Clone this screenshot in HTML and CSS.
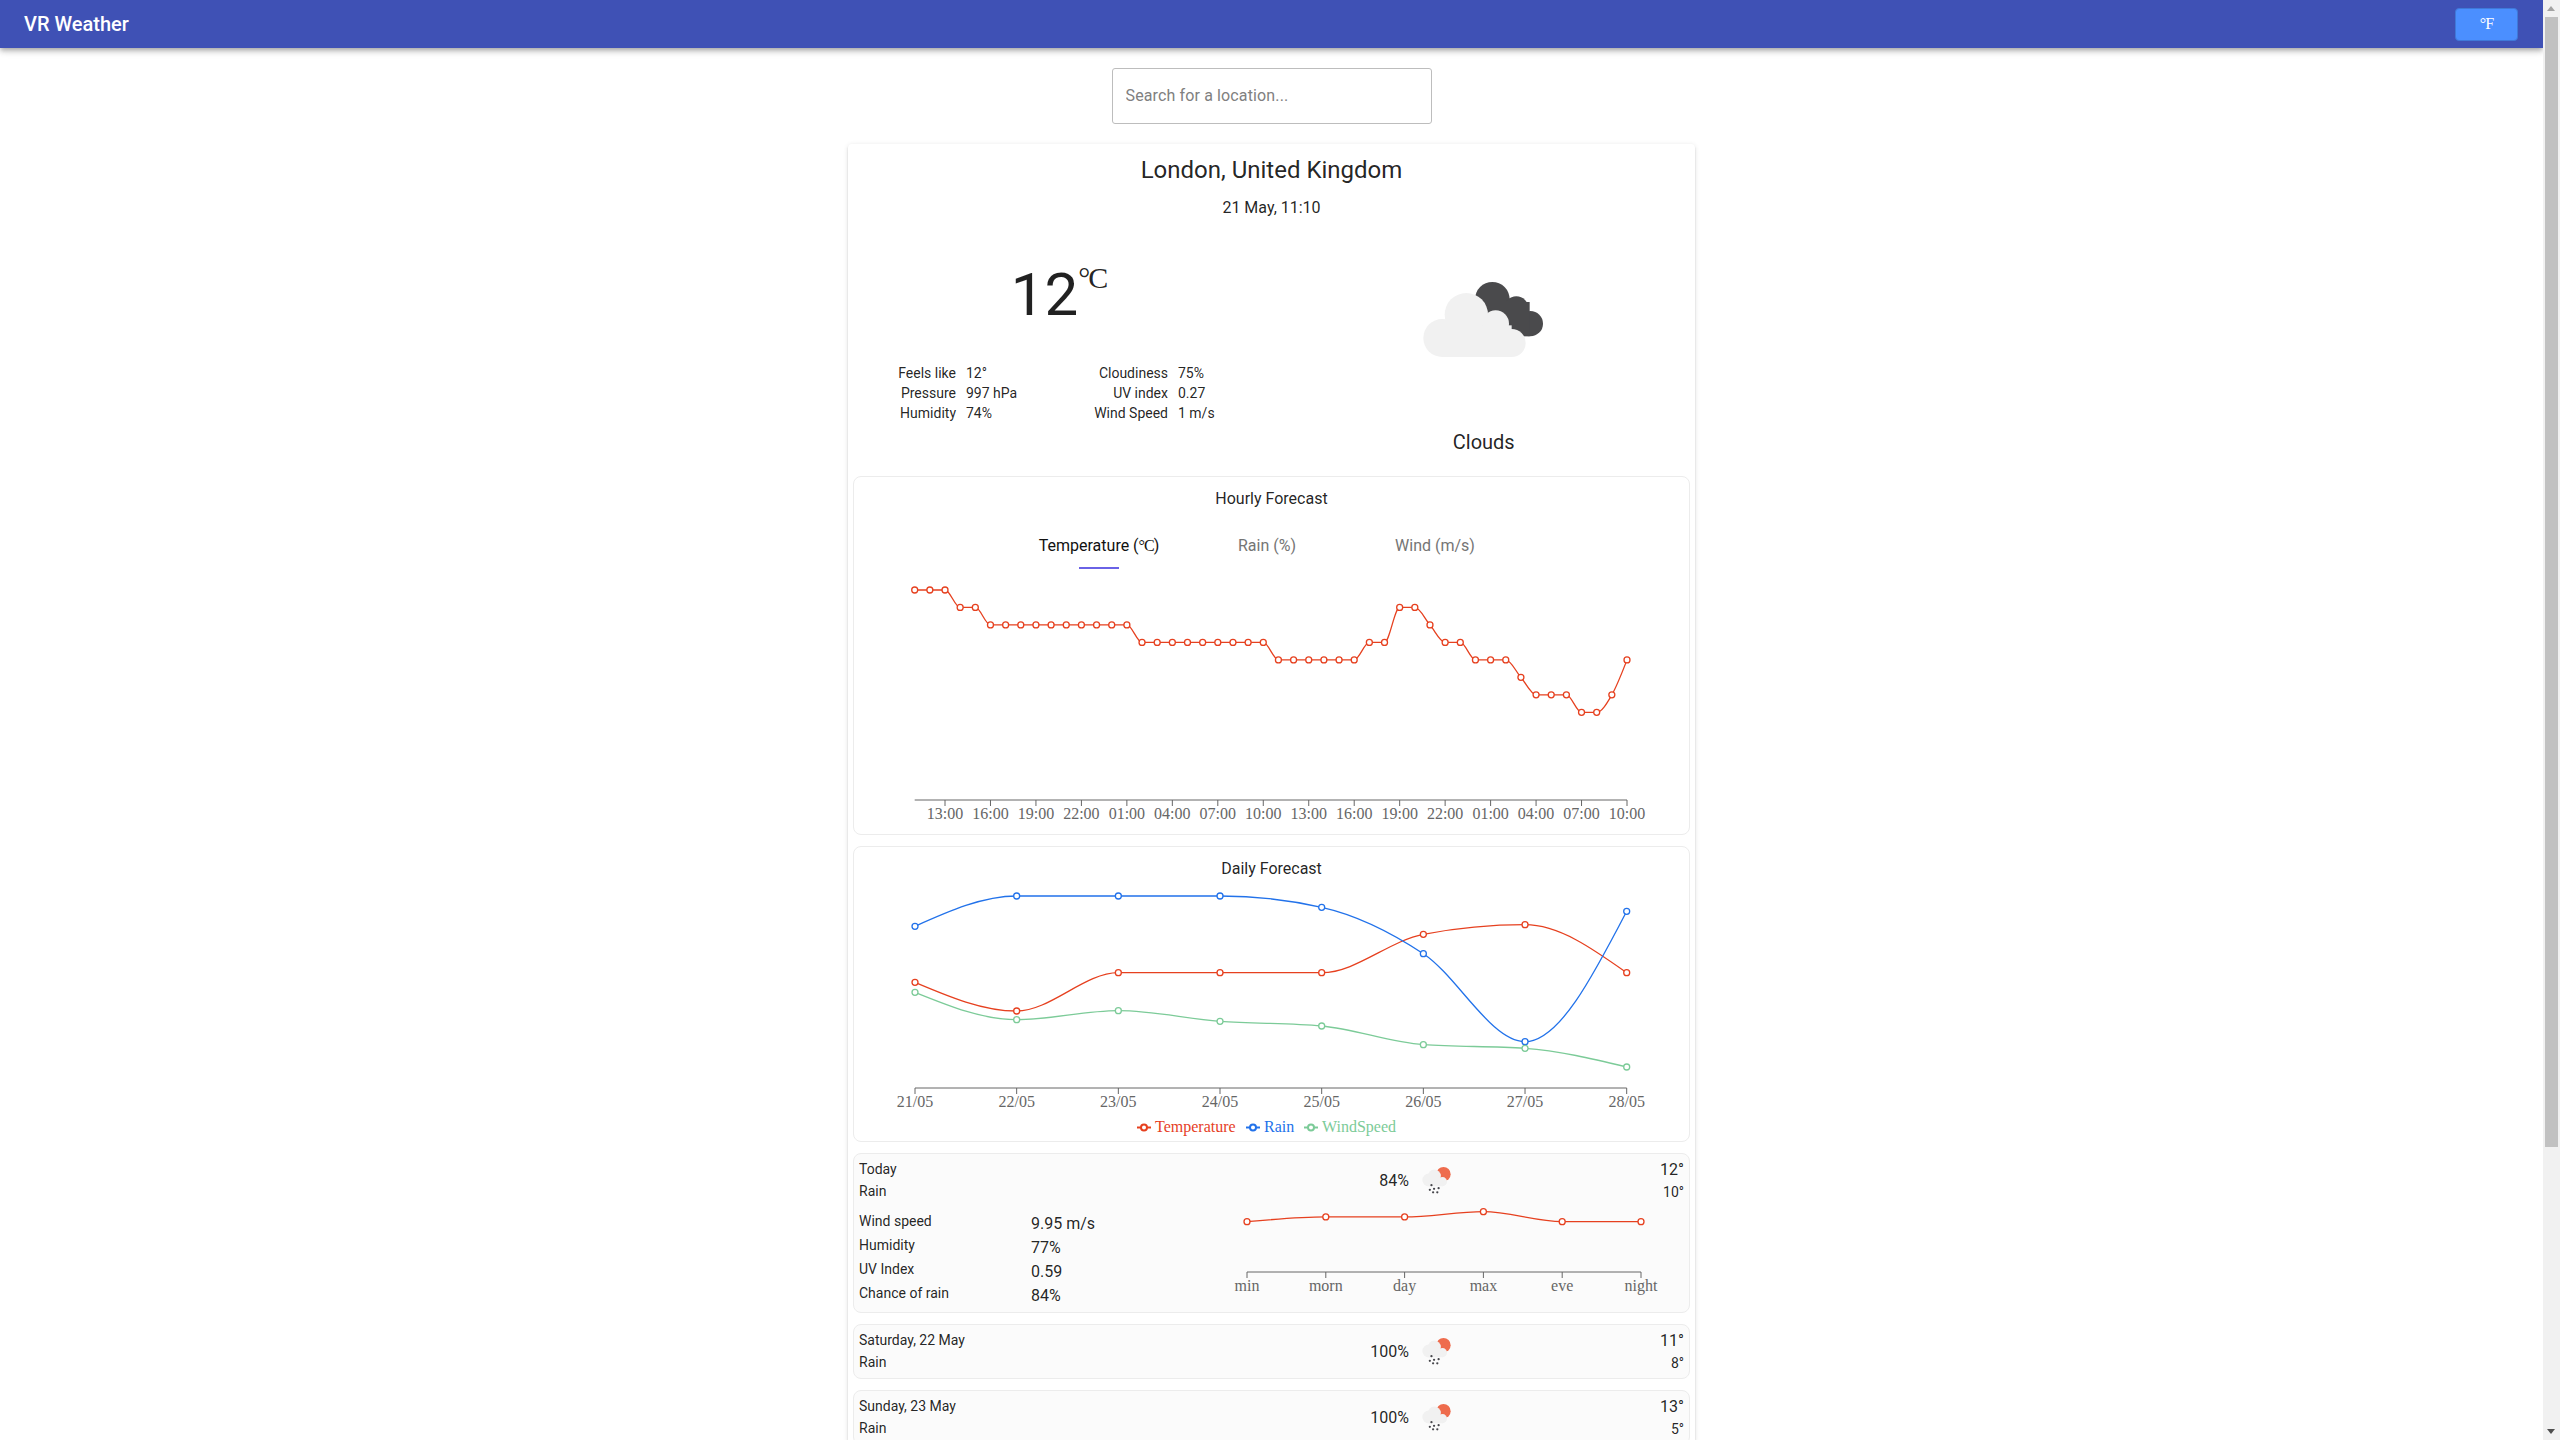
FILE: index.html
```html
<!DOCTYPE html>
<html lang="en">
<head>
<meta charset="utf-8">
<title>VR Weather</title>
<link rel="stylesheet" href="styles.css">
</head>
<body>
<svg class="defs" aria-hidden="true">
  <defs>
    <g id="rain">
      <circle cx="250" cy="72" r="22" fill="#ee6c4d"/>
      <g fill="#f1f1f1">
        <circle cx="205" cy="90" r="20"/>
        <circle cx="222" cy="78" r="20"/>
        <circle cx="247" cy="95" r="14"/>
        <rect x="205" y="85" width="42" height="24"/>
      </g>
      <g fill="#47474c">
        <circle cx="213" cy="106" r="3.5"/>
        <circle cx="208" cy="120" r="3.5"/>
        <circle cx="221" cy="117" r="3.5"/>
        <circle cx="235" cy="115" r="3.5"/>
        <circle cx="218" cy="128" r="3.5"/>
        <circle cx="231" cy="128" r="3.5"/>
      </g>
    </g>
  </defs>
</svg>
<div class="page">
  <div class="viewport">
    <header class="toolbar">
      <span class="brand">VR Weather</span>
      <button class="unit-btn" type="button">°F</button>
    </header>
    <div class="search-row">
      <input class="search" type="text" placeholder="Search for a location...">
    </div>
    <main class="card">
      <h1 class="city">London, United Kingdom</h1>
      <div class="date">21 May, 11:10</div>
      <section class="now">
        <div class="now-left">
          <div class="temp"><span>12</span><span class="temp-unit">°C</span></div>
          <div class="stats">
            <div class="stat-col">
              <div class="stat"><span class="stat-k">Feels like</span><span>12°</span></div>
              <div class="stat"><span class="stat-k">Pressure</span><span>997 hPa</span></div>
              <div class="stat"><span class="stat-k">Humidity</span><span>74%</span></div>
            </div>
            <div class="stat-col">
              <div class="stat"><span class="stat-k">Cloudiness</span><span>75%</span></div>
              <div class="stat"><span class="stat-k">UV index</span><span>0.27</span></div>
              <div class="stat"><span class="stat-k">Wind Speed</span><span>1 m/s</span></div>
            </div>
          </div>
        </div>
        <div class="now-right">
          <svg class="cloud" viewBox="70 65 360 225" aria-hidden="true">
            <g fill="#4a4a4c">
              <circle cx="278" cy="117" r="52"/>
              <circle cx="350" cy="145" r="37"/>
              <circle cx="392" cy="190" r="38"/>
              <rect x="240" y="125" width="150" height="103"/>
            </g>
            <g fill="#f1f1f1">
              <circle cx="200" cy="163" r="65"/>
              <circle cx="128" cy="233" r="57"/>
              <circle cx="288" cy="190" r="40"/>
              <circle cx="336" cy="248" r="42"/>
              <rect x="128" y="195" width="208" height="95"/>
            </g>
          </svg>
          <div class="condition">Clouds</div>
        </div>
      </section>

      <section class="panel hourly">
        <div class="panel-title">Hourly Forecast</div>
        <div class="tabs">
          <div class="tab active">Temperature (<span class="serif">°C</span>)</div>
          <div class="tab">Rain (%)</div>
          <div class="tab">Wind (m/s)</div>
        </div>
        <svg class="chart chart-hourly" id="hourly"></svg>
      </section>

      <section class="panel daily">
        <div class="panel-title">Daily Forecast</div>
        <svg class="chart chart-daily" id="daily"></svg>
      </section>

      <section class="panel day">
        <div class="day-head">
          <div class="day-left"><div>Today</div><div>Rain</div></div>
          <div class="day-pct">84%</div>
          <svg class="rain-icon" viewBox="185 50 87 83" aria-hidden="true"><use href="#rain"/></svg>
          <div class="day-temps"><div class="hi">12°</div><div class="lo">10°</div></div>
        </div>
        <div class="day-detail">
          <div class="facts">
            <div class="fact-k">Wind speed</div><div class="fact-v">9.95 m/s</div>
            <div class="fact-k">Humidity</div><div class="fact-v">77%</div>
            <div class="fact-k">UV Index</div><div class="fact-v">0.59</div>
            <div class="fact-k">Chance of rain</div><div class="fact-v">84%</div>
          </div>
          <svg class="chart chart-today" id="today"></svg>
        </div>
      </section>

      <section class="panel day">
        <div class="day-head">
          <div class="day-left"><div>Saturday, 22 May</div><div>Rain</div></div>
          <div class="day-pct">100%</div>
          <svg class="rain-icon" viewBox="185 50 87 83" aria-hidden="true"><use href="#rain"/></svg>
          <div class="day-temps"><div class="hi">11°</div><div class="lo">8°</div></div>
        </div>
      </section>

      <section class="panel day">
        <div class="day-head">
          <div class="day-left"><div>Sunday, 23 May</div><div>Rain</div></div>
          <div class="day-pct">100%</div>
          <svg class="rain-icon" viewBox="185 50 87 83" aria-hidden="true"><use href="#rain"/></svg>
          <div class="day-temps"><div class="hi">13°</div><div class="lo">5°</div></div>
        </div>
      </section>
    </main>
  </div>
  <div class="scrollbar" aria-hidden="true">
    <div class="scroll-up"></div>
    <div class="scroll-thumb"></div>
    <div class="scroll-down"></div>
  </div>
</div>
<script src="charts.js"></script>
</body>
</html>
```
FILE: styles.css
```css
* { box-sizing: border-box; }
html, body { margin: 0; padding: 0; height: 1440px; overflow: hidden; background: #fff; }
body { font-family: Roboto, "Noto Sans", sans-serif; font-size: 14px; color: rgba(0,0,0,.87); }

.page { display: flex; height: 1440px; }
.viewport { flex: 1; min-width: 0; height: 1440px; overflow: hidden; }

.scrollbar { flex: 0 0 17px; background: #f1f1f1; display: flex; flex-direction: column; }
.scroll-up, .scroll-down { height: 17px; flex: none; position: relative; }
.scroll-down { margin-top: auto; }
.scroll-up::after { content: ""; position: absolute; left: 4px; top: 6px; border: 4px solid transparent; border-top: 0; border-bottom: 5px solid #a3a3a3; }
.scroll-down::after { content: ""; position: absolute; left: 4px; top: 6px; border: 4px solid transparent; border-bottom: 0; border-top: 5px solid #505050; }
.scroll-thumb { height: 1130px; margin: 0 2px; background: #c1c1c1; flex: none; }

.toolbar { position: relative; z-index: 2; height: 48px; background: #3f51b5; color: #fff; display: flex; align-items: center; justify-content: space-between; padding: 0 25px 0 24px; box-shadow: 0 2px 4px -1px rgba(0,0,0,.2), 0 4px 5px 0 rgba(0,0,0,.14), 0 1px 10px 0 rgba(0,0,0,.12); }
.brand { font-size: 20px; font-weight: 500; }
.unit-btn { width: 63px; height: 33px; background: #4b8fff; color: #fff; border: 1px solid #3f79d8; border-radius: 4px; font-family: "Liberation Serif", serif; font-size: 16px; letter-spacing: -1px; padding: 0; }

.search-row { display: flex; justify-content: center; padding-top: 20px; }
.search { width: 320px; height: 56px; border: 1px solid #bdbdbd; border-radius: 3px; padding: 0 13px 2px; font: 16px Roboto, sans-serif; letter-spacing: .13px; outline: none; background: #fff; }
.search::placeholder { color: #808080; opacity: 1; }

.card { width: 847px; margin: 20px auto 0; padding: 10px 5px 0; background: #fff; border-radius: 4px; box-shadow: 0 3px 1px -2px rgba(0,0,0,.2), 0 2px 2px 0 rgba(0,0,0,.14), 0 1px 5px 0 rgba(0,0,0,.12); }
.city { margin: 0; font-size: 24px; font-weight: 400; line-height: 32px; text-align: center; }
.date { margin-top: 10px; font-size: 16px; line-height: 24px; text-align: center; }

.now { display: flex; margin: 0 -5px; height: 256px; }
.now-left, .now-right { flex: 0 0 50%; }
.now-left { padding-top: 39px; }
.temp { display: flex; justify-content: center; height: 72px; padding-right: 3px; line-height: 72px; font-size: 60px; font-weight: 400; }
.temp-unit { font-family: "Liberation Serif", serif; font-size: 30px; line-height: 37px; letter-spacing: -2px; font-weight: 400; }
.stats { display: flex; margin-top: 32px; }
.stat-col { flex: 0 0 212px; }
.stat { display: flex; line-height: 20px; height: 20px; }
.stat-k { width: 108px; margin-right: 10px; text-align: right; }

.now-right { display: flex; flex-direction: column; align-items: center; padding-top: 62px; }
.cloud { width: 120px; height: 75px; display: block; margin-right: 2px; }
.condition { margin-top: 71px; font-size: 20px; line-height: 28px; }

.panel { border: 1px solid #ececec; border-radius: 8px; margin-bottom: 11px; background: #fff; }
.panel-title { font-size: 16px; height: 24px; line-height: 26px; text-align: center; }
.hourly { height: 359px; padding-top: 9px; }
.daily { height: 296px; padding-top: 9px; }
.tabs { display: flex; justify-content: center; margin-top: 11px; padding-right: 9px; }
.tab { width: 168px; height: 48px; line-height: 49px; font-size: 16px; text-align: center; color: #757575; position: relative; }
.tab.active { color: #111; }
.tab.active::after { content: ""; position: absolute; left: 64px; bottom: 0; width: 40px; height: 2px; background: #6a62e6; }
.serif { font-family: "Liberation Serif", serif; letter-spacing: -1px; }

.chart { display: block; font-family: "Liberation Serif", serif; font-size: 16px; }
.chart-hourly { width: 835px; height: 265px; }
.chart-daily { width: 835px; height: 261px; }
.chart-today { width: 589px; height: 105px; flex: none; }

.day { background: #fbfbfb; }
.day-head { display: flex; align-items: center; height: 53px; padding: 4px 5px 5px; }
.day-left { width: 440px; line-height: 22px; }
.day-pct { width: 110px; text-align: right; font-size: 16px; }
.rain-icon { width: 29px; height: 27px; margin: 1px 0 0 13px; flex: none; }
.day-temps { margin-left: auto; padding-top: 2px; text-align: right; line-height: 22px; }
.hi { font-size: 16px; }
.lo { font-size: 14px; }

.day-detail { display: flex; justify-content: space-between; height: 105px; padding-left: 5px; }
.facts { display: grid; grid-template-columns: 172px auto; grid-auto-rows: 24px; padding-top: 2px; align-content: start; }
.fact-k { line-height: 24px; }
.fact-v { font-size: 16px; line-height: 30px; height: 24px; }

.defs { position: absolute; width: 0; height: 0; }
```
FILE: charts.js
```js
(function () {
  var NS = 'http://www.w3.org/2000/svg';
  var RED = '#e6401f', BLUE = '#2272ea', GREEN = '#7ccb98', AXIS = '#666';

  function el(parent, name, attrs, text) {
    var n = document.createElementNS(NS, name);
    for (var k in attrs) n.setAttribute(k, attrs[k]);
    if (text !== undefined) n.textContent = text;
    parent.appendChild(n);
    return n;
  }

  // Monotone cubic interpolation (Fritsch-Carlson, as d3 curveMonotoneX)
  function monotonePath(p) {
    var n = p.length, d = [], m = [], i;
    for (i = 0; i < n - 1; i++) d[i] = (p[i + 1][1] - p[i][1]) / (p[i + 1][0] - p[i][0]);
    for (i = 1; i < n - 1; i++) {
      var h0 = p[i][0] - p[i - 1][0], h1 = p[i + 1][0] - p[i][0];
      var s0 = d[i - 1], s1 = d[i], q = (s0 * h1 + s1 * h0) / (h0 + h1);
      m[i] = ((s0 > 0) - (s0 < 0) + (s1 > 0) - (s1 < 0)) * Math.min(Math.abs(s0), Math.abs(s1), 0.5 * Math.abs(q)) || 0;
    }
    m[0] = n > 1 ? (3 * d[0] - m[1]) / 2 : 0;
    m[n - 1] = (3 * d[n - 2] - m[n - 2]) / 2;
    var s = 'M' + p[0][0] + ',' + p[0][1];
    for (i = 0; i < n - 1; i++) {
      var h = (p[i + 1][0] - p[i][0]) / 3;
      s += 'C' + (p[i][0] + h) + ',' + (p[i][1] + m[i] * h) + ' ' + (p[i + 1][0] - h) + ',' + (p[i + 1][1] - m[i + 1] * h) + ' ' + p[i + 1][0] + ',' + p[i + 1][1];
    }
    return s;
  }

  function series(svg, pts, color) {
    el(svg, 'path', { d: monotonePath(pts), fill: 'none', stroke: color, 'stroke-width': 1.3 });
    pts.forEach(function (q) {
      el(svg, 'circle', { cx: q[0], cy: q[1], r: 3, fill: '#fff', stroke: color, 'stroke-width': 1.3 });
    });
  }

  function axis(svg, y, x0, x1, ticks, baseline) {
    el(svg, 'line', { x1: x0, x2: x1, y1: y, y2: y, stroke: AXIS, 'stroke-width': 1 });
    ticks.forEach(function (t) {
      el(svg, 'line', { x1: t.x, x2: t.x, y1: y, y2: y + 6, stroke: AXIS, 'stroke-width': 1 });
      el(svg, 'text', { x: t.x, y: baseline, fill: AXIS, 'text-anchor': 'middle' }, t.label);
    });
  }

  // ---- Hourly ----- (svg origin on the page: 854, 569)
  var hourlySvg = document.getElementById('hourly');
  var levels = [0,0,0,1,1,2,2,2,2,2,2,2,2,2,2,3,3,3,3,3,3,3,3,3,4,4,4,4,4,4,3,3,1,1,2,3,3,4,4,4,5,6,6,6,7,7,6,4];
  var hDx = (1627 - 914.7) / 47;
  var hPts = levels.map(function (l, i) { return [60.7 + i * hDx, 21 + l * 17.47]; });
  var hLabels = ['13:00','16:00','19:00','22:00','01:00','04:00','07:00','10:00','13:00','16:00','19:00','22:00','01:00','04:00','07:00','10:00'];
  axis(hourlySvg, 231, hPts[0][0], hPts[47][0], hLabels.map(function (label, i) {
    return { x: hPts[2 + i * 3][0], label: label };
  }), 250);
  series(hourlySvg, hPts, RED);

  // ---- Daily ----- (svg origin on the page: 854, 880)
  var dailySvg = document.getElementById('daily');
  var dDx = (1626.7 - 915) / 7;
  function dailyPts(ys) { return ys.map(function (y, i) { return [61 + i * dDx, y - 880]; }); }
  var temp = dailyPts([982.3, 1011, 972.7, 972.7, 972.7, 934.3, 924.7, 972.7]);
  var rain = dailyPts([926.3, 896, 896, 896, 907.3, 953.7, 1041.7, 911.3]);
  var wind = dailyPts([992.3, 1019.7, 1010.7, 1021.3, 1026, 1044.7, 1048.3, 1067]);
  var dLabels = ['21/05','22/05','23/05','24/05','25/05','26/05','27/05','28/05'];
  axis(dailySvg, 208, temp[0][0], temp[7][0], dLabels.map(function (label, i) {
    return { x: temp[i][0], label: label };
  }), 227);
  series(dailySvg, temp, RED);
  series(dailySvg, rain, BLUE);
  series(dailySvg, wind, GREEN);

  [[283, 'Temperature', RED], [392, 'Rain', BLUE], [450, 'WindSpeed', GREEN]].forEach(function (l) {
    el(dailySvg, 'line', { x1: l[0], x2: l[0] + 14, y1: 247.5, y2: 247.5, stroke: l[2], 'stroke-width': 2 });
    el(dailySvg, 'circle', { cx: l[0] + 7, cy: 247.5, r: 3, fill: '#fff', stroke: l[2], 'stroke-width': 2 });
    el(dailySvg, 'text', { x: l[0] + 18, y: 252, fill: l[2] }, l[1]);
  });

  // ---- Today ----- (svg origin on the page: 1100, 1207)
  var todaySvg = document.getElementById('today');
  var tPts = [14.7, 9.9, 9.9, 4.7, 14.7, 14.7].map(function (y, i) { return [147 + i * 78.8, y]; });
  var tLabels = ['min','morn','day','max','eve','night'];
  axis(todaySvg, 65, tPts[0][0], tPts[5][0], tLabels.map(function (label, i) {
    return { x: tPts[i][0], label: label };
  }), 84);
  series(todaySvg, tPts, RED);
})();
```
